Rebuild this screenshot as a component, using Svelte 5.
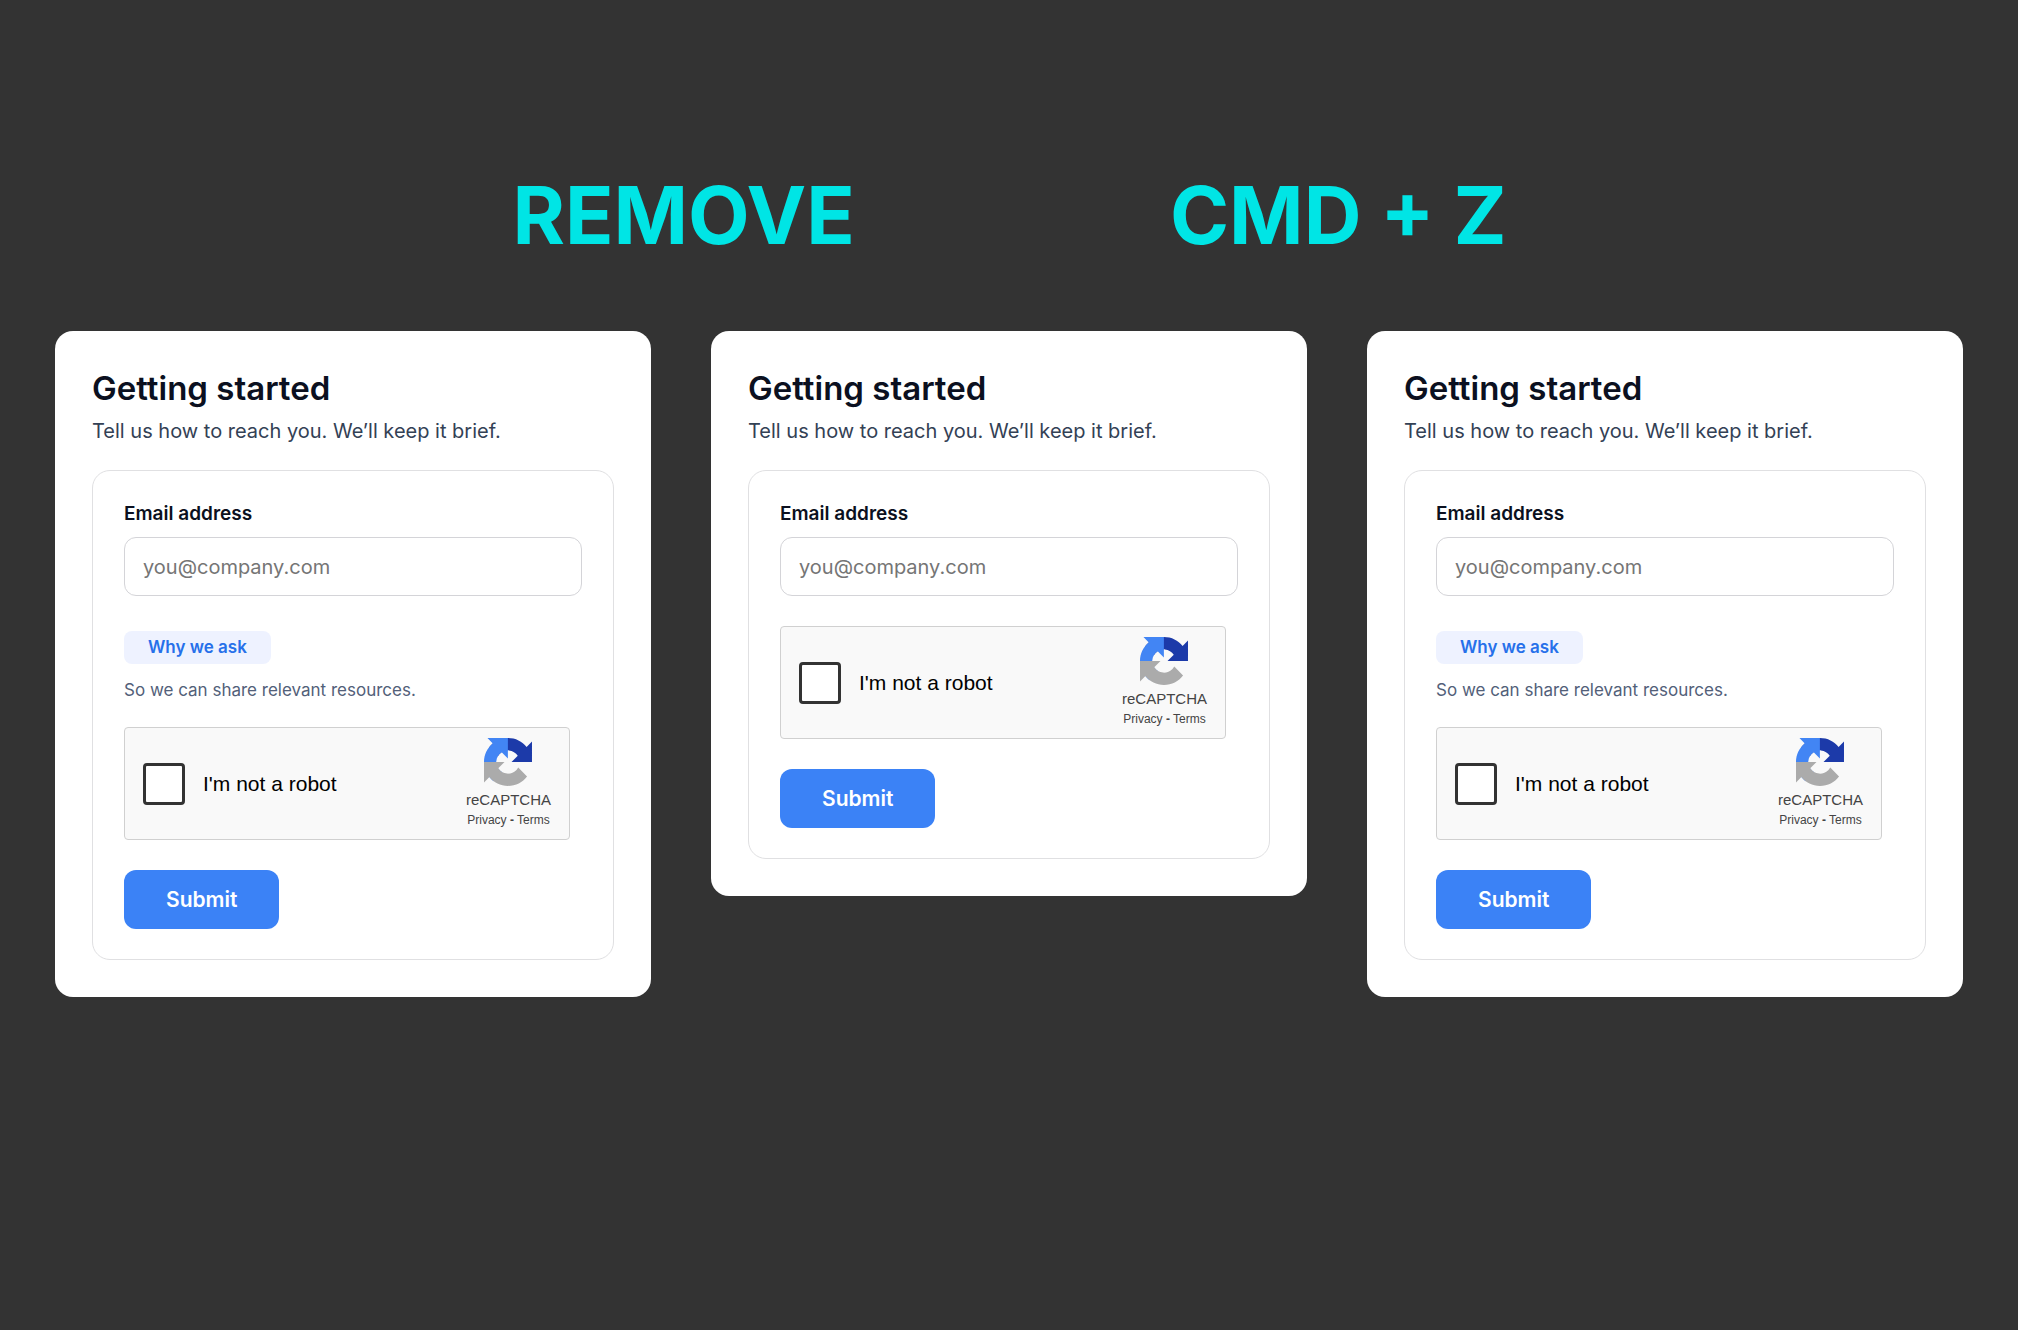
<script>
	const headings = ['REMOVE', 'CMD + Z'];

	let cards = $state([
		{ id: 'before', showHint: true, email: '', checked: false },
		{ id: 'removed', showHint: false, email: '', checked: false },
		{ id: 'restored', showHint: true, email: '', checked: false }
	]);
</script>

<main>
	<header class="headings">
		{#each headings as heading}
			<h1>{heading}</h1>
		{/each}
	</header>

	<div class="cards">
		{#each cards as card (card.id)}
			<section class="card">
				<h2>Getting started</h2>
				<p class="subtitle">Tell us how to reach you. We’ll keep it brief.</p>

				<form class="form" onsubmit={(e) => e.preventDefault()}>
					<label class="field-label" for="email-{card.id}">Email address</label>
					<input
						class="field-input"
						type="email"
						id="email-{card.id}"
						placeholder="you@company.com"
						bind:value={card.email}
					/>

					{#if card.showHint}
						<div class="hint">
							<span class="hint-badge">Why we ask</span>
							<p class="hint-text">So we can share relevant resources.</p>
						</div>
					{/if}

					<div class="captcha">
						<input type="checkbox" id="robot-{card.id}" bind:checked={card.checked} />
						<label for="robot-{card.id}">I'm not a robot</label>
						<div class="captcha-brand">
							<svg viewBox="0 0 64 64" width="48" height="48" aria-hidden="true">
								<path
									fill="#1c3aa9"
									d="M64 31.955l-.033-1.37V4.687l-7.16 7.16C50.948 4.674 42.033.093 32.05.093c-10.4 0-19.622 4.96-25.458 12.64l11.736 11.86a15.55 15.55 0 0 1 4.754-5.334c2.05-1.6 4.952-2.906 8.968-2.906.485 0 .86.057 1.135.163 4.976.393 9.288 3.14 11.828 7.124l-8.307 8.307L64 31.953"
								/>
								<path
									fill="#4285f4"
									d="M31.862.094l-1.37.033H4.594l7.16 7.16C4.58 13.147 0 22.06 0 32.046c0 10.4 4.96 19.622 12.64 25.458L24.5 45.768a15.55 15.55 0 0 1-5.334-4.754c-1.6-2.05-2.906-4.952-2.906-8.968 0-.485.057-.86.163-1.135.393-4.976 3.14-9.288 7.124-11.828l8.307 8.307L31.86.095"
								/>
								<path
									fill="#ababab"
									d="M.001 32.045l.033 1.37v25.898l7.16-7.16c5.86 7.173 14.774 11.754 24.76 11.754 10.4 0 19.622-4.96 25.458-12.64l-11.736-11.86a15.55 15.55 0 0 1-4.754 5.334c-2.05 1.6-4.952 2.906-8.968 2.906-.485 0-.86-.057-1.135-.163-4.976-.393-9.288-3.14-11.828-7.124l8.307-8.307c-10.522.04-22.4.066-27.295-.005"
								/>
							</svg>
							<span class="captcha-name">reCAPTCHA</span>
							<span class="captcha-links">
								<a href="#privacy">Privacy</a> <b>-</b> <a href="#terms">Terms</a>
							</span>
						</div>
					</div>

					<button type="submit">Submit</button>
				</form>
			</section>
		{/each}
	</div>
</main>

<style>
	:global(body) {
		background: #333;
	}

	main {
		min-height: 100vh;
		box-sizing: border-box;
		padding: 167px 55px 60px;
		font-family: Inter, 'Liberation Sans', sans-serif;
		color: #0b1020;
	}

	h1,
	h2,
	p {
		margin: 0;
	}

	.headings {
		display: flex;
		justify-content: center;
		gap: 60px;
		margin-bottom: 68px;
		padding-left: 4px;
	}

	/* each heading is one card wide, so it centres on the gap between two cards */
	h1 {
		flex: 0 0 calc((100% - 120px) / 3);
		text-align: center;
		font-size: 80px;
		line-height: 96px;
		font-weight: 700;
		color: #00e5e5;
	}

	.cards {
		display: grid;
		grid-template-columns: repeat(3, minmax(0, 1fr));
		align-items: start;
		gap: 60px;
	}

	.card {
		padding: 37px;
		border-radius: 18px;
		background: #fff;
	}

	h2 {
		font-size: 33px;
		line-height: 40px;
		font-weight: 600;
	}

	.subtitle {
		margin-top: 8px;
		font-size: 20px;
		line-height: 30px;
		color: #334155;
	}

	.form {
		display: flex;
		flex-direction: column;
		align-items: flex-start;
		margin-top: 24px;
		padding: 30px 31px;
		border: 1px solid #e0e0e2;
		border-radius: 18px;
	}

	.field-label {
		margin-bottom: 10px;
		font-size: 19px;
		line-height: 26px;
		font-weight: 600;
	}

	.field-input {
		width: 100%;
		height: 59px;
		box-sizing: border-box;
		padding: 0 18px;
		border: 1px solid #d4d4d8;
		border-radius: 12px;
		background: #fff;
		font-family: inherit;
		font-size: 20px;
		color: inherit;
	}

	.field-input::placeholder {
		color: #757575;
		opacity: 1;
	}

	.hint {
		margin: 35px 0 -6px;
	}

	.hint-badge {
		display: block;
		width: fit-content;
		padding: 0 24px;
		border-radius: 8px;
		background: #eef2ff;
		font-size: 17px;
		line-height: 33px;
		font-weight: 600;
		color: #2670ea;
	}

	.hint-text {
		margin-top: 13px;
		font-size: 17px;
		line-height: 26px;
		color: #526079;
	}

	.captcha {
		display: flex;
		align-items: center;
		width: 100%;
		max-width: 446px;
		height: 113px;
		box-sizing: border-box;
		margin: 30px 0;
		padding: 0 18px;
		border: 1px solid #d0d0d0;
		border-radius: 4px;
		background: #f9f9f9;
		font-family: 'Liberation Sans', Arial, sans-serif;
	}

	.captcha input {
		appearance: none;
		width: 42px;
		height: 42px;
		margin: 0 18px 0 0;
		border: 3px solid #333;
		border-radius: 4px;
		background: #fff;
		cursor: pointer;
	}

	.captcha input:checked {
		background: #3b82f6;
	}

	.captcha label {
		flex: 1;
		font-size: 21px;
		line-height: 26px;
		color: #000;
	}

	.captcha-brand {
		display: flex;
		flex-direction: column;
		align-items: center;
		color: #444;
	}

	.captcha-name {
		margin-top: 4px;
		font-size: 15px;
		line-height: 20px;
	}

	.captcha-links {
		font-size: 12px;
		line-height: 20px;
	}

	.captcha-links a {
		color: inherit;
		text-decoration: none;
	}

	button {
		height: 59px;
		padding: 0 42px;
		border: 0;
		border-radius: 12px;
		background: #3b82f6;
		font-family: inherit;
		font-size: 21px;
		font-weight: 600;
		color: #fff;
		cursor: pointer;
	}
</style>
